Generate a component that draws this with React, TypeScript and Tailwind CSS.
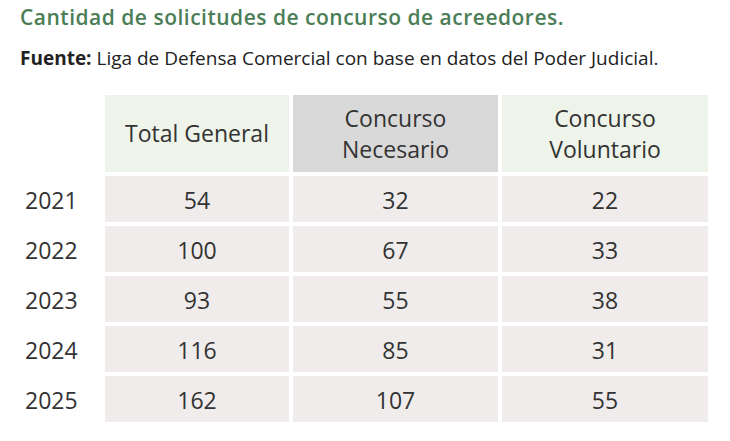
import React from "react";

const rows = [
  ["2021", "54", "32", "22"],
  ["2022", "100", "67", "33"],
  ["2023", "93", "55", "38"],
  ["2024", "116", "85", "31"],
  ["2025", "162", "107", "55"],
];

export default function App() {
  return (
    <div
      className="w-[730px] h-[441px] bg-white text-[#333333] overflow-hidden"
      style={{ fontFamily: '"Open Sans", "Noto Sans", sans-serif' }}
    >
      <div className="pl-[20px] pt-[3px]">
        <h1 className="text-[21px] leading-[28px] font-semibold text-[#4b7d56] tracking-[0.5px] whitespace-nowrap">
          Cantidad de solicitudes de concurso de acreedores.
        </h1>
        <p className="mt-[14px] text-[19px] leading-[26px] text-[#222222] whitespace-nowrap">
          <span className="font-bold">Fuente:</span> Liga de Defensa Comercial con base en datos del Poder Judicial.
        </p>
      </div>
      <div className="mt-[24px] ml-[20px] grid grid-cols-[81px_184px_205px_206px] gap-[4px] text-[23px]">
        <div className="h-[77px]" />
        <div className="h-[77px] bg-[#eef4ea] flex items-center justify-center text-center leading-[31px]">
          Total General
        </div>
        <div className="h-[77px] bg-[#d9d9d9] flex items-center justify-center text-center leading-[31px]">
          Concurso
          <br />
          Necesario
        </div>
        <div className="h-[77px] bg-[#eef4ea] flex items-center justify-center text-center leading-[31px]">
          Concurso
          <br />
          Voluntario
        </div>
        {rows.map((r) => (
          <React.Fragment key={r[0]}>
            <div className="h-[46px] flex items-center pl-[5px] pt-[3px]">{r[0]}</div>
            <div className="h-[46px] bg-[#efeceb] flex items-center justify-center pt-[2px]">{r[1]}</div>
            <div className="h-[46px] bg-[#efeceb] flex items-center justify-center pt-[2px]">{r[2]}</div>
            <div className="h-[46px] bg-[#efeceb] flex items-center justify-center pt-[2px]">{r[3]}</div>
          </React.Fragment>
        ))}
      </div>
    </div>
  );
}
